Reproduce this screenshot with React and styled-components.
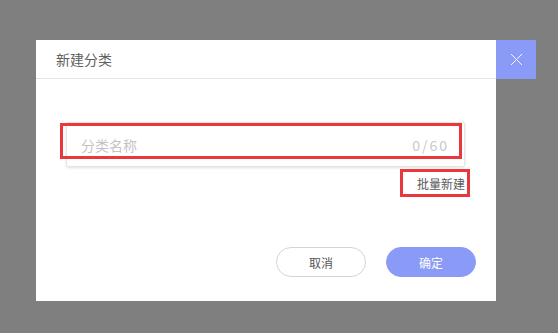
import React from 'react';
import styled, { createGlobalStyle } from 'styled-components';

const GlobalStyle = createGlobalStyle`
  html, body {
    margin: 0;
    padding: 0;
    background: #7f7f7f;
    font-family: "Noto Sans CJK SC", "Noto Sans", sans-serif;
  }
`;

const Page = styled.div`
  width: 558px;
  height: 333px;
  box-sizing: border-box;
  padding: 40px 0 0 36px;
  display: flex;
  align-items: flex-start;
`;

const Dialog = styled.div`
  position: relative;
  width: 460px;
  height: 261px;
  background: #fff;
  display: flex;
  flex-direction: column;
`;

const Header = styled.div`
  height: 38px;
  border-bottom: 1px solid #e3e3e3;
  padding-left: 20px;
  display: flex;
  align-items: center;
  font-size: 14px;
  color: #606060;
`;

const CloseButton = styled.button`
  width: 40px;
  height: 39px;
  border: none;
  padding: 0;
  background: #8a9af7;
  display: flex;
  align-items: center;
  justify-content: center;
  cursor: pointer;
`;

const Body = styled.div`
  flex: 1;
  padding: 43px 31px 0 30px;
  display: flex;
  flex-direction: column;
`;

const InputBox = styled.div`
  height: 45px;
  box-sizing: border-box;
  border: 1px solid #e6e6e6;
  box-shadow: 0 1px 3px rgba(0, 0, 0, 0.12);
  border-radius: 2px;
  display: flex;
  align-items: center;
  justify-content: space-between;
  padding: 0 15px 0 14px;
  font-size: 14px;
`;

const Placeholder = styled.span`
  color: #c4c4c4;
`;

const Counter = styled.span`
  color: #c8c8c8;
  letter-spacing: 2px;
`;

const BatchLink = styled.div`
  align-self: flex-end;
  margin-top: 9px;
  font-size: 12px;
  line-height: 16px;
  color: #5a5a5a;
  cursor: pointer;
`;

const Footer = styled.div`
  margin-top: auto;
  padding: 0 20px 24px;
  display: flex;
  justify-content: flex-end;
  gap: 20px;
`;

const Button = styled.button`
  width: 90px;
  height: 30px;
  border-radius: 15px;
  font-family: inherit;
  font-size: 12px;
  cursor: pointer;
  border: 1px solid ${(p) => (p.$primary ? '#8a9af7' : '#d4d4d4')};
  background: ${(p) => (p.$primary ? '#8a9af7' : '#fff')};
  color: ${(p) => (p.$primary ? '#fff' : '#555')};
`;

const Mark = styled.div`
  position: absolute;
  box-sizing: border-box;
  border: 3px solid #e8383d;
  pointer-events: none;
`;

export default function App() {
  return (
    <>
      <GlobalStyle />
      <Page>
        <Dialog>
          <Header>新建分类</Header>
          <Body>
            <InputBox>
              <Placeholder>分类名称</Placeholder>
              <Counter>0/60</Counter>
            </InputBox>
            <BatchLink>批量新建</BatchLink>
          </Body>
          <Footer>
            <Button>取消</Button>
            <Button $primary>确定</Button>
          </Footer>
          <Mark style={{ left: 24, top: 83, width: 402, height: 36 }} />
          <Mark style={{ left: 364, top: 129, width: 70, height: 28 }} />
        </Dialog>
        <CloseButton aria-label="close">
          <svg width="13" height="13" viewBox="0 0 13 13">
            <path d="M1 1 L12 12 M12 1 L1 12" stroke="rgba(255,255,255,0.9)" strokeWidth="1" fill="none" />
          </svg>
        </CloseButton>
      </Page>
    </>
  );
}
